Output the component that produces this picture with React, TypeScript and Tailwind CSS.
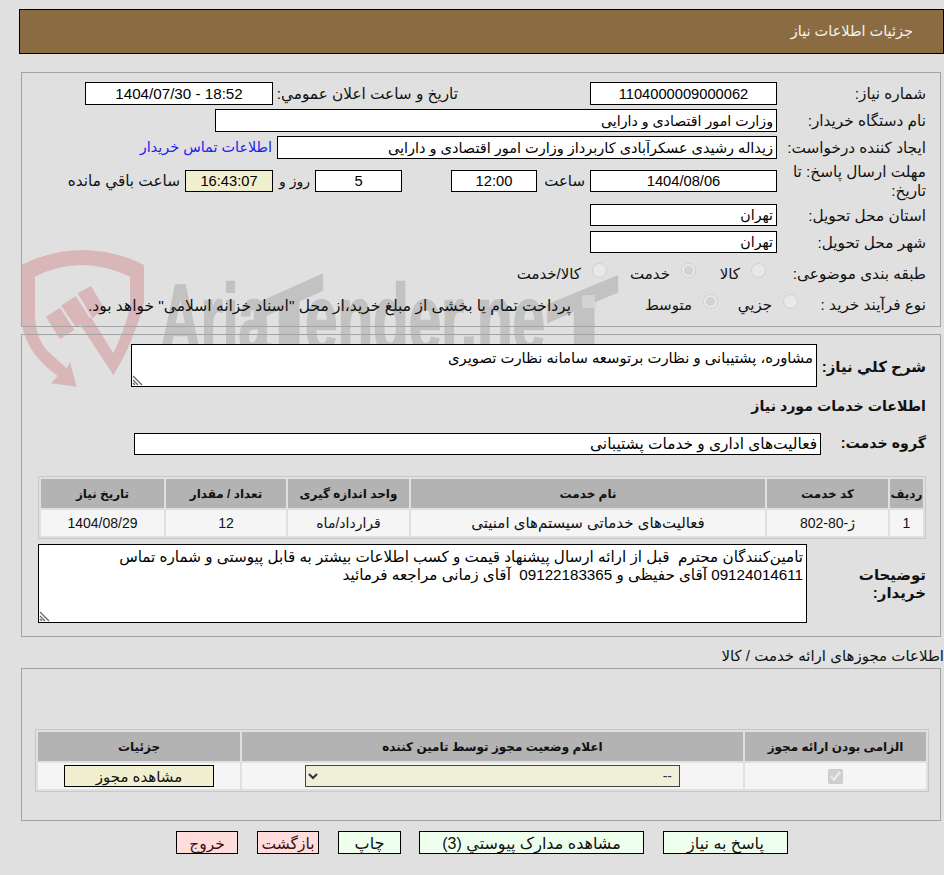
const field =
  "h-full border border-black px-[3px] text-black outline-none";
const textField = `${field} bg-white text-[14.2px]`;
const numField = `${field} bg-white text-center text-[14.7px]`;
const label = "shrink-0 whitespace-normal text-[15.3px] leading-[19px] text-[#111]";
const boldLabel = "shrink-0 text-[14.2px] font-bold text-[#111]";
const th = "h-[29px] bg-[#b3b3b3] p-0 text-center text-[12px] font-bold text-[#111]";
const td = "h-[26px] bg-[#f5f5f5] p-0 text-center text-[14px] text-[#111]";
const btnGreen =
  "h-[23px] border border-black bg-[#eeffee] pb-[2px] text-center text-[16px] text-[#111]";
const btnRed =
  "h-[23px] w-[62px] border border-black bg-[#ffdddd] pb-[2px] text-center text-[15.5px] text-[#3a1010]";

function Watermark() {
  return (
    <svg
      dir="ltr"
      className="absolute left-[15px] top-[240px] h-[160px] w-[620px]"
      viewBox="0 0 1860 480"
      aria-hidden="true"
    >
      <g fill="#d9b7b9">
        <path d="M18 75 Q110 30 200 30 Q300 30 387 75 L387 190 Q350 320 295 405 L190 245 L228 232 L295 340 Q345 230 345 190 L345 110 Q270 75 200 75 Q130 75 60 110 L60 220 Q60 300 105 340 L155 385 L165 365 L185 440 L108 430 L128 408 Q18 330 18 220 Z" />
        <path d="M93 230 L135 203 L178 270 L135 298 Z" />
        <path d="M138 197 L182 168 L225 235 L183 262 Z" />
        <path d="M188 160 L228 138 L268 205 L232 235 Z" />
      </g>
      <g fill="#c2c2c2" stroke="#c2c2c2" strokeWidth="7">
        <text
          x="435"
          y="335"
          direction="ltr"
          fontFamily="Liberation Sans"
          fontWeight="700"
          fontSize="290"
          textLength="330"
          lengthAdjust="spacingAndGlyphs"
        >
          Aria
        </text>
        <path d="M720 195 L921 105 L921 150 L850 182 L850 335 L795 335 L795 205 L720 240 Z" />
        <text
          x="870"
          y="335"
          direction="ltr"
          fontFamily="Liberation Sans"
          fontWeight="700"
          fontSize="290"
          textLength="720"
          lengthAdjust="spacingAndGlyphs"
        >
          ender.ne
        </text>
        <path d="M1600 195 L1806 110 L1806 155 L1735 185 L1735 345 L1680 345 L1680 210 L1600 245 Z" />
      </g>
    </svg>
  );
}

function ResizeGrip() {
  return (
    <svg className="absolute bottom-[1px] left-[1px] h-[11px] w-[11px]" viewBox="0 0 11 11" aria-hidden="true">
      <path d="M1 1 L10 10 M1 5 L6 10 M1 8 L3 10" stroke="#666" strokeWidth="1.3" fill="none" />
    </svg>
  );
}

function Radio({ checked, width, text }: { checked?: boolean; width: string; text: string }) {
  return (
    <label className={`flex shrink-0 items-center gap-[11px] ${width}`}>
      <input type="radio" disabled checked={!!checked} readOnly className="m-0 h-[15px] w-[15px] -translate-y-[3px] opacity-60" />
      <span className="translate-y-[1px] text-[15px] text-[#111]">{text}</span>
    </label>
  );
}

export default function App() {
  return (
    <div
      dir="rtl"
      className="relative h-[875px] w-[944px] overflow-hidden bg-[#e0e0e0] pt-[9px] font-['Liberation_Sans','DejaVu_Sans',sans-serif]"
    >
      <Watermark />
      <div className="relative">
        <header className="flex h-[45px] w-[925px] items-center border border-black bg-[#8b6c42] pr-[30px] text-[14.5px] text-[#f2f2f2]">
          جزئیات اطلاعات نیاز
        </header>

        <section className="mr-[3px] mt-[18px] h-[255px] w-[920px] border border-[#a3a3a3] pr-[14px] pt-[9px]">
          <div className="flex h-[23px] items-center">
            <span className={`${label} w-[149px]`}>شماره نياز:</span>
            <input readOnly value="1104000009000062" className={`${numField} w-[187px]`} />
            <span className={`${label} mr-[132px] w-[185px] whitespace-nowrap`}>تاریخ و ساعت اعلان عمومي:</span>
            <input
              readOnly
              value="1404/07/30 - 18:52"
              dir="ltr"
              className={`${field} w-[188px] bg-white text-center text-[15.2px]`}
            />
          </div>
          <div className="mt-[4px] flex h-[23px] items-center">
            <span className={`${label} w-[149px]`}>نام دستگاه خریدار:</span>
            <input readOnly value="وزارت امور اقتصادی و دارایی" className={`${textField} w-[562px]`} />
          </div>
          <div className="mt-[4px] flex h-[23px] items-center">
            <span className={`${label} w-[149px]`}>ایجاد کننده درخواست:</span>
            <input
              readOnly
              value="زیداله رشیدی عسکرآبادی کاربرداز وزارت امور اقتصادی و دارایی"
              className={`${field} w-[500px] bg-white text-[14.5px]`}
            />
            <a className="mr-[5px] text-[14.4px] text-[#2222ee]">اطلاعات تماس خریدار</a>
          </div>
          <div className="mt-[3px] flex h-[38px] items-center">
            <span className={`${label} w-[144px]`}>مهلت ارسال پاسخ: تا تاریخ:</span>
            <div className="mr-[5px] flex h-[22px] items-center">
              <input readOnly value="1404/08/06" className={`${numField} w-[187px]`} />
              <span className="w-[53px] pr-[5px] text-[15px] text-[#111]">ساعت</span>
              <input readOnly value="12:00" className={`${numField} w-[86px]`} />
              <span className="w-[49px]" />
              <input readOnly value="5" className={`${numField} w-[87px]`} />
              <span className="w-[42px] pr-[5px] text-[14px] text-[#111]">روز و</span>
              <input
                readOnly
                value="16:43:07"
                className={`${field} w-[88px] bg-[#f0f0d0] text-center text-[14.7px]`}
              />
              <span className="pr-[5px] text-[15.3px] text-[#111]">ساعت باقي مانده</span>
            </div>
          </div>
          <div className="mt-[4px] flex h-[22px] items-center">
            <span className={`${label} w-[149px]`}>استان محل تحویل:</span>
            <input readOnly value="تهران" className={`${textField} w-[187px]`} />
          </div>
          <div className="mt-[5px] flex h-[22px] items-center">
            <span className={`${label} w-[149px]`}>شهر محل تحویل:</span>
            <input readOnly value="تهران" className={`${textField} w-[187px]`} />
          </div>
          <div className="mt-[7px] flex h-[27px] items-center">
            <span className={`${label} w-[160px]`}>طبقه بندی موضوعی:</span>
            <Radio width="w-[70px]" text="کالا" />
            <Radio width="w-[89px]" checked text="خدمت" />
            <Radio width="w-[120px]" text="کالا/خدمت" />
          </div>
          <div className="mt-[4px] flex h-[27px] items-center">
            <span className={`${label} w-[128px]`}>نوع فرآیند خرید :</span>
            <Radio width="w-[80px]" text="جزيي" />
            <Radio width="w-[122px]" checked text="متوسط" />
            <input type="checkbox" disabled className="m-0 h-[15px] w-[15px] -translate-y-[3px] opacity-50" />
            <span className="mr-[10px] translate-y-[1px] text-[15.5px] text-[#111]">
              پرداخت تمام یا بخشی از مبلغ خرید،از محل "اسناد خزانه اسلامی" خواهد بود.
            </span>
          </div>
        </section>

        <section className="mr-[3px] mt-[7px] h-[303px] w-[920px] border border-[#a3a3a3] pr-[14px] pt-[9px]">
          <div className="flex h-[43px] items-center">
            <span className={`${boldLabel} w-[109px] pt-[3px] text-[15px]`}>شرح كلي نياز:</span>
            <div className="relative h-[43px] w-[686px]">
              <textarea
                readOnly
                value="مشاوره، پشتیبانی و نظارت برتوسعه سامانه نظارت تصویری"
                className="block h-full w-full resize-none border border-black bg-white px-[3px] pt-[2px] text-[14.8px] text-black outline-none"
              />
              <ResizeGrip />
            </div>
          </div>
          <h3 className="mt-[7px] h-[25px] text-[14.2px] font-bold leading-[25px] text-[#111]">
            اطلاعات خدمات مورد نیاز
          </h3>
          <div className="mt-[14px] flex h-[22px] items-center">
            <span className={`${boldLabel} w-[105px]`}>گروه خدمت:</span>
            <input
              readOnly
              value="فعالیت‌های اداری و خدمات پشتیبانی"
              className={`${field} w-[687px] bg-white text-[15.4px]`}
            />
          </div>
          <table className="mt-[21px] w-[888px] table-fixed border-separate border-spacing-[2px] border border-[#c8c8c8]">
            <thead>
              <tr>
                <th className={`${th} w-[33px]`}>ردیف</th>
                <th className={`${th} w-[121px]`}>کد خدمت</th>
                <th className={`${th} w-[354px]`}>نام خدمت</th>
                <th className={`${th} w-[121px]`}>واحد اندازه گیری</th>
                <th className={`${th} w-[120px]`}>تعداد / مقدار</th>
                <th className={`${th} w-[123px]`}>تاریخ نیاز</th>
              </tr>
            </thead>
            <tbody>
              <tr>
                <td className={td}>1</td>
                <td className={td}>ژ-80-802</td>
                <td className={`${td} text-[15px]`}>فعالیت‌های خدماتی سیستم‌های امنیتی</td>
                <td className={td}>قرارداد/ماه</td>
                <td className={td}>12</td>
                <td className={td}>1404/08/29</td>
              </tr>
            </tbody>
          </table>
          <div className="mt-[5px] flex h-[79px] items-center">
            <span className={`${boldLabel} w-[119px] text-[15px] leading-[18px]`}>
              توضیحات
              <br />
              خریدار:
            </span>
            <div className="relative h-[79px] w-[769px]">
              <textarea
                readOnly
                value={"تامین‌کنندگان محترم  قبل از ارائه ارسال پیشنهاد قیمت و کسب اطلاعات بیشتر به قابل پیوستی و شماره تماس\n09124014611 آقای حفیظی و 09122183365  آقای زمانی مراجعه فرمائید"}
                className="block h-full w-full resize-none border border-black bg-white px-[3px] pt-[3px] text-[15.2px] leading-[18px] text-black outline-none"
              />
              <ResizeGrip />
            </div>
          </div>
        </section>

        <div className="mt-[7px] h-[24px] text-[15px] leading-[24px] text-[#111]">
          اطلاعات مجوزهای ارائه خدمت / کالا
        </div>

        <section className="mr-[3px] h-[153px] w-[920px] border border-[#a3a3a3] pr-[11px] pt-[60px]">
          <table className="w-[894px] table-fixed border-separate border-spacing-[2px] border border-[#c8c8c8]">
            <thead>
              <tr>
                <th className={`${th} w-[181px]`}>الزامی بودن ارائه مجوز</th>
                <th className={`${th} w-[501px]`}>اعلام وضعیت مجوز توسط تامین کننده</th>
                <th className={`${th} w-[202px]`}>جزئیات</th>
              </tr>
            </thead>
            <tbody>
              <tr>
                <td className={td}>
                  <input type="checkbox" disabled checked readOnly className="m-0 h-[15px] w-[15px] align-middle" />
                </td>
                <td className={td}>
                  <select
                    disabled
                    className="h-[22px] w-[375px] border border-[#444] bg-[#f0f0d8] px-[3px] align-middle text-[14px] text-[#333] opacity-100"
                  >
                    <option>--</option>
                  </select>
                </td>
                <td className={td}>
                  <button className="h-[22px] w-[150px] border border-black bg-[#f0f0d0] align-middle text-[15px] text-[#111]">
                    مشاهده مجوز
                  </button>
                </td>
              </tr>
            </tbody>
          </table>
        </section>

        <div className="mr-[156px] mt-[10px] flex gap-[19px]">
          <button className={`${btnGreen} w-[125px]`}>پاسخ به نیاز</button>
          <button className={`${btnGreen} ml-[-1px] w-[225px]`}>مشاهده مدارک پیوستي (3)</button>
          <button className={`${btnGreen} w-[63px]`}>چاپ</button>
          <button className={btnRed}>بازگشت</button>
          <button className={btnRed}>خروج</button>
        </div>
      </div>
    </div>
  );
}
